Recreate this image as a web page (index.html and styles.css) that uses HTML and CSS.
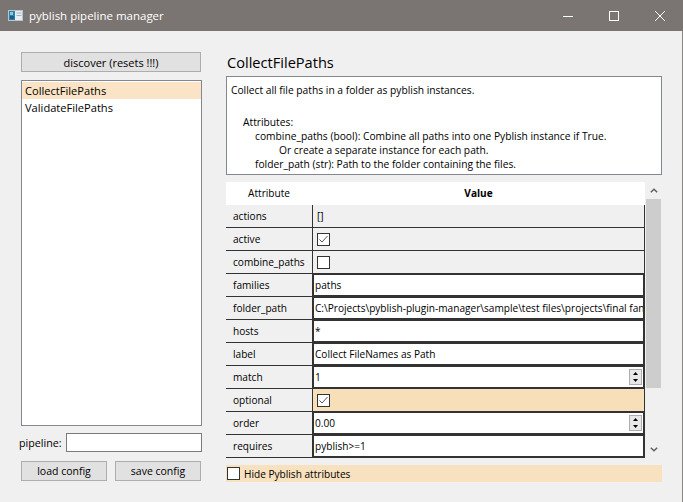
FILE: index.html
```html
<!DOCTYPE html>
<html>
<head>
<meta charset="utf-8">
<title>pyblish pipeline manager</title>
<link rel="stylesheet" href="styles.css">
</head>
<body>
<div class="titlebar">
  <svg class="app-icon" viewBox="0 0 15 11" width="15" height="11">
    <rect x="0.5" y="0.5" width="14" height="10" fill="#e8eef2" stroke="#b9c4cc"/>
    <rect x="1" y="1" width="6" height="9" fill="#2f7fa8"/>
    <rect x="2" y="2" width="3" height="3" fill="#7fd0d8"/>
    <rect x="2" y="6" width="4" height="3" fill="#1c5e86"/>
    <rect x="8.5" y="2.5" width="5" height="1" fill="#9fb3c0"/>
    <rect x="8.5" y="5" width="5" height="1" fill="#9fb3c0"/>
  </svg>
  <span class="title">pyblish pipeline manager</span>
  <div class="controls">
    <span class="ctl"><svg width="10" height="10" viewBox="0 0 10 10"><line x1="0" y1="5.5" x2="10" y2="5.5" stroke="#fff" stroke-width="1"/></svg></span>
    <span class="ctl"><svg width="10" height="10" viewBox="0 0 10 10"><rect x="0.5" y="0.5" width="9" height="9" fill="none" stroke="#fff" stroke-width="1"/></svg></span>
    <span class="ctl"><svg width="10" height="10" viewBox="0 0 10 10"><path d="M0 0 L10 10 M10 0 L0 10" stroke="#fff" stroke-width="1"/></svg></span>
  </div>
</div>
<div class="main">
  <div class="left">
    <div class="btn discover">discover (resets !!!)</div>
    <div class="list">
      <div class="item selected">CollectFilePaths</div>
      <div class="item">ValidateFilePaths</div>
    </div>
    <div class="pipeline-row">
      <span class="plabel">pipeline:</span>
      <div class="input"></div>
    </div>
    <div class="btn-row">
      <div class="btn">load config</div>
      <div class="btn">save config</div>
    </div>
  </div>
  <div class="right">
    <div class="heading">CollectFilePaths</div>
    <div class="doc">
      <div>Collect all file paths in a folder as pyblish instances.</div>
      <div class="blank"></div>
      <div class="ind1">Attributes:</div>
      <div class="ind2">combine_paths (bool): Combine all paths into one Pyblish instance if True.</div>
      <div class="ind3">Or create a separate instance for each path.</div>
      <div class="ind2">folder_path (str): Path to the folder containing the files.</div>
    </div>
    <div class="table-wrap">
      <div class="table">
        <div class="thead">
          <div class="th">Attribute</div>
          <div class="th bold">Value</div>
        </div>
        <div class="row"><div class="attr">actions</div><div class="val"><span class="plain">[]</span></div></div>
        <div class="row"><div class="attr">active</div><div class="val"><span class="cb checked"><svg width="11" height="11" viewBox="0 0 11 11"><polyline points="1.5,5.5 4,8 9.5,2" fill="none" stroke="#555" stroke-width="1"/></svg></span></div></div>
        <div class="row"><div class="attr">combine_paths</div><div class="val"><span class="cb"></span></div></div>
        <div class="row"><div class="attr">families</div><div class="val"><div class="editor">paths</div></div></div>
        <div class="row"><div class="attr">folder_path</div><div class="val"><div class="editor">C:\Projects\pyblish-plugin-manager\sample\test files\projects\final fantasy</div></div></div>
        <div class="row"><div class="attr">hosts</div><div class="val"><div class="editor">*</div></div></div>
        <div class="row"><div class="attr">label</div><div class="val"><div class="editor">Collect FileNames as Path</div></div></div>
        <div class="row"><div class="attr">match</div><div class="val"><div class="editor">1<span class="spin"><span class="sb"><svg width="5" height="3" viewBox="0 0 5 3"><polygon points="0,3 2.5,0 5,3" fill="#000"/></svg></span><span class="sb"><svg width="5" height="3" viewBox="0 0 5 3"><polygon points="0,0 2.5,3 5,0" fill="#000"/></svg></span></span></div></div></div>
        <div class="row"><div class="attr">optional</div><div class="val hl"><span class="cb checked"><svg width="11" height="11" viewBox="0 0 11 11"><polyline points="1.5,5.5 4,8 9.5,2" fill="none" stroke="#555" stroke-width="1"/></svg></span></div></div>
        <div class="row"><div class="attr">order</div><div class="val"><div class="editor">0.00<span class="spin"><span class="sb"><svg width="5" height="3" viewBox="0 0 5 3"><polygon points="0,3 2.5,0 5,3" fill="#000"/></svg></span><span class="sb"><svg width="5" height="3" viewBox="0 0 5 3"><polygon points="0,0 2.5,3 5,0" fill="#000"/></svg></span></span></div></div></div>
        <div class="row"><div class="attr">requires</div><div class="val"><div class="editor">pyblish&gt;=1</div></div></div>
      </div>
      <div class="vscroll">
        <div class="arrow"><svg width="8" height="5" viewBox="0 0 8 5"><polyline points="0.8,4.3 4,1.2 7.2,4.3" fill="none" stroke="#606060" stroke-width="1.5"/></svg></div>
        <div class="thumb"></div>
        <div class="track"></div>
        <div class="arrow"><svg width="8" height="5" viewBox="0 0 8 5"><polyline points="0.8,0.7 4,3.8 7.2,0.7" fill="none" stroke="#606060" stroke-width="1.5"/></svg></div>
      </div>
    </div>
    <div class="hide-row"><span class="cb"></span><span class="hide-label">Hide Pyblish attributes</span></div>
  </div>
</div>
</body>
</html>
```

FILE: styles.css
```css
* { box-sizing: border-box; }
html, body { margin: 0; padding: 0; }
body {
  width: 683px;
  height: 502px;
  overflow: hidden;
  background: #f0f0f0;
  font-family: "Open Sans", "Noto Sans", sans-serif;
  font-size: 10.6px;
  color: #000;
}
.titlebar {
  height: 31px;
  background: #7a7472;
  display: flex;
  align-items: center;
  color: #fff;
}
.app-icon { margin-left: 8px; flex: none; }
.title { margin-left: 6px; font-size: 11.5px; }
.controls { margin-left: auto; display: flex; }
.ctl {
  width: 46px;
  height: 31px;
  display: flex;
  align-items: center;
  justify-content: center;
}
.main {
  display: flex;
  height: 471px;
  border-right: 1px solid #8a8482;
}
.left {
  width: 202px;
  padding-left: 19px;
  padding-top: 21px;
  display: flex;
  flex-direction: column;
  flex: none;
}
.btn {
  background: #e1e1e1;
  border: 1px solid #adadad;
  height: 20px;
  display: flex;
  align-items: center;
  justify-content: center;
  font-size: 10.5px;
}
.discover { margin-left: 2px; width: 180px; font-size: 11px; }
.list {
  margin-left: 2px;
  margin-top: 8px;
  width: 181px;
  height: 346px;
  background: #fff;
  border: 1px solid #828790;
  padding-top: 1px;
  font-size: 11.1px;
}
.item {
  height: 17px;
  line-height: 17px;
  padding-left: 3px;
}
.item.selected { background: #fbe4c6; }
.pipeline-row {
  margin-top: 7px;
  display: flex;
  align-items: center;
  height: 19px;
}
.plabel { width: 47px; font-size: 10.7px; }
.input {
  width: 136px;
  height: 19px;
  background: #fff;
  border: 1px solid #7a7a7a;
}
.btn-row {
  margin-top: 9px;
  margin-left: 2px;
  display: flex;
  gap: 8px;
}
.btn-row .btn { width: 86px; }
.right {
  margin-left: 24px;
  width: 436px;
  padding-top: 21px;
  display: flex;
  flex-direction: column;
}
.heading {
  height: 20px;
  line-height: 20px;
  font-size: 14.6px;
  margin-left: 1px;
}
.doc {
  margin-top: 4px;
  height: 99px;
  background: #fff;
  border: 1px solid #828790;
  padding: 6px 4px 0;
  line-height: 14px;
  font-size: 10.25px;
}
.doc .blank { height: 18px; }
.ind1 { padding-left: 12px; }
.ind2 { padding-left: 24px; }
.ind3 { padding-left: 48px; }
.table-wrap {
  margin-top: 7px;
  display: flex;
  height: 276px;
  font-size: 10.1px;
}
.table { width: 419px; }
.thead {
  display: grid;
  grid-template-columns: 86px 333px;
  height: 23px;
  background: #fff;
}
.th {
  text-align: center;
  line-height: 23px;
}
.bold { font-weight: bold; }
.row {
  display: grid;
  grid-template-columns: 86px 333px;
  height: 23px;
  border-bottom: 1px solid #333;
}
.attr {
  padding-left: 7px;
  line-height: 22px;
  background: #f0f0f0;
  white-space: nowrap;
  overflow: hidden;
}
.val {
  border-left: 1px solid #333;
  border-right: 1px solid #333;
  background: #f0f0f0;
  display: flex;
  align-items: center;
  padding-left: 4px;
  overflow: hidden;
}
.val.hl { background: #f7dfba; }
.val:has(.editor) { padding-left: 0; }
.plain { line-height: 22px; }
.editor {
  width: 100%;
  height: 100%;
  background: #fff;
  border: 1px solid #333;
  padding-left: 1px;
  display: flex;
  align-items: center;
  white-space: nowrap;
  overflow: hidden;
}
.spin {
  margin-left: auto;
  margin-right: 1px;
  width: 13px;
  height: 16px;
  border: 1px solid #adadad;
  background: #e8e8e8;
  display: flex;
  flex-direction: column;
  flex: none;
}
.sb {
  flex: 1;
  display: flex;
  align-items: center;
  justify-content: center;
}
.cb {
  width: 13px;
  height: 13px;
  border: 1px solid #333;
  background: #fff;
  display: flex;
  align-items: center;
  justify-content: center;
  flex: none;
}
.vscroll {
  width: 17px;
  background: #f0f0f0;
  display: flex;
  flex-direction: column;
}
.arrow {
  height: 17px;
  display: flex;
  align-items: center;
  justify-content: center;
  flex: none;
}
.thumb {
  margin: 0 1px;
  height: 189px;
  background: #cdcdcd;
  flex: none;
}
.track { flex: 1; }
.hide-row {
  margin-top: 7px;
  height: 17px;
  background: #f8e1bf;
  display: flex;
  align-items: center;
  font-size: 10.1px;
}
.hide-row .cb { margin-left: 1px; }
.hide-label { margin-left: 4px; }
```
